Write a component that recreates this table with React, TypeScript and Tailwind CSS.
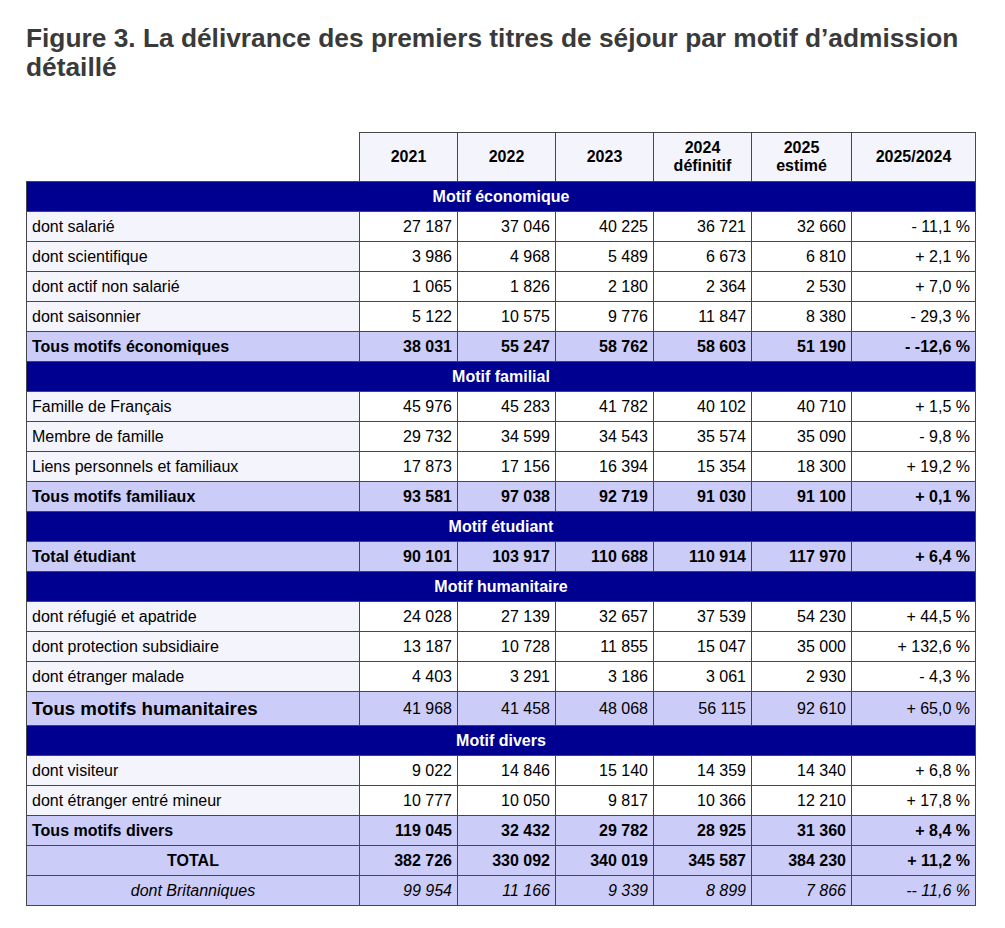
type Row =
  | { kind: "section"; label: string }
  | { kind: "data" | "total" | "italic" | "grand" | "big"; label: string; values: string[] };

const rows: Row[] = [
  { kind: "section", label: "Motif économique" },
  { kind: "data", label: "dont salarié", values: ["27 187", "37 046", "40 225", "36 721", "32 660", "- 11,1 %"] },
  { kind: "data", label: "dont scientifique", values: ["3 986", "4 968", "5 489", "6 673", "6 810", "+ 2,1 %"] },
  { kind: "data", label: "dont actif non salarié", values: ["1 065", "1 826", "2 180", "2 364", "2 530", "+ 7,0 %"] },
  { kind: "data", label: "dont saisonnier", values: ["5 122", "10 575", "9 776", "11 847", "8 380", "- 29,3 %"] },
  { kind: "total", label: "Tous motifs économiques", values: ["38 031", "55 247", "58 762", "58 603", "51 190", "- -12,6 %"] },
  { kind: "section", label: "Motif familial" },
  { kind: "data", label: "Famille de Français", values: ["45 976", "45 283", "41 782", "40 102", "40 710", "+ 1,5 %"] },
  { kind: "data", label: "Membre de famille", values: ["29 732", "34 599", "34 543", "35 574", "35 090", "- 9,8 %"] },
  { kind: "data", label: "Liens personnels et familiaux", values: ["17 873", "17 156", "16 394", "15 354", "18 300", "+ 19,2 %"] },
  { kind: "total", label: "Tous motifs familiaux", values: ["93 581", "97 038", "92 719", "91 030", "91 100", "+ 0,1 %"] },
  { kind: "section", label: "Motif étudiant" },
  { kind: "total", label: "Total étudiant", values: ["90 101", "103 917", "110 688", "110 914", "117 970", "+ 6,4 %"] },
  { kind: "section", label: "Motif humanitaire" },
  { kind: "data", label: "dont réfugié et apatride", values: ["24 028", "27 139", "32 657", "37 539", "54 230", "+ 44,5 %"] },
  { kind: "data", label: "dont protection subsidiaire", values: ["13 187", "10 728", "11 855", "15 047", "35 000", "+ 132,6 %"] },
  { kind: "data", label: "dont étranger malade", values: ["4 403", "3 291", "3 186", "3 061", "2 930", "- 4,3 %"] },
  { kind: "big", label: "Tous motifs humanitaires", values: ["41 968", "41 458", "48 068", "56 115", "92 610", "+ 65,0 %"] },
  { kind: "section", label: "Motif divers" },
  { kind: "data", label: "dont visiteur", values: ["9 022", "14 846", "15 140", "14 359", "14 340", "+ 6,8 %"] },
  { kind: "data", label: "dont étranger entré mineur", values: ["10 777", "10 050", "9 817", "10 366", "12 210", "+ 17,8 %"] },
  { kind: "total", label: "Tous motifs divers", values: ["119 045", "32 432", "29 782", "28 925", "31 360", "+ 8,4 %"] },
  { kind: "grand", label: "TOTAL", values: ["382 726", "330 092", "340 019", "345 587", "384 230", "+ 11,2 %"] },
  { kind: "italic", label: "dont Britanniques", values: ["99 954", "11 166", "9 339", "8 899", "7 866", "-- 11,6 %"] },
];

const cell = "border border-[#474747] px-[5px]";

function TableRow({ row }: { row: Row }) {
  if (row.kind === "section") {
    return (
      <tr className="h-[30px]">
        <td colSpan={7} className={`${cell} bg-[#000090] text-center font-bold text-white`}>
          {row.label}
        </td>
      </tr>
    );
  }

  // lignes de total : fond lavande
  const lavender = row.kind !== "data";
  const labelBg = lavender ? "bg-[#ccccf8]" : "bg-[#f4f4fc]";
  const numBg = lavender ? "bg-[#ccccf8]" : "bg-white";
  const weight = row.kind === "total" || row.kind === "grand" ? "font-bold" : "font-normal";
  const style = row.kind === "italic" ? "italic" : "";

  let labelClass = `${cell} ${labelBg} text-left ${weight} ${style}`;
  if (row.kind === "grand" || row.kind === "italic") labelClass = `${cell} ${labelBg} text-center ${weight} ${style}`;
  if (row.kind === "big") labelClass = `${cell} ${labelBg} text-left text-[18.67px] font-bold`;

  return (
    <tr className={row.kind === "big" ? "h-[34px]" : "h-[30px]"}>
      <td className={labelClass}>{row.label}</td>
      {row.values.map((v, i) => (
        <td key={i} className={`${cell} ${numBg} text-right ${weight} ${style}`}>
          {v}
        </td>
      ))}
    </tr>
  );
}

export default function App() {
  return (
    <div className="min-h-[928px] w-[1005px] bg-white pl-[26px] pt-[24px] font-['Liberation_Sans',Arial,sans-serif] text-black">
      <h1 className="text-[26.3px] font-bold leading-[29px] text-[#3a3a3a]">
        Figure 3. La délivrance des premiers titres de séjour par motif d’admission détaillé
      </h1>

      <table className="mt-[50px] w-[949px] table-fixed border-collapse text-[16px]">
        <colgroup>
          <col className="w-[333px]" />
          <col className="w-[98px]" />
          <col className="w-[98px]" />
          <col className="w-[98px]" />
          <col className="w-[98px]" />
          <col className="w-[100px]" />
          <col className="w-[124px]" />
        </colgroup>
        <thead>
          <tr className="h-[49px]">
            <th className="border-0"></th>
            {["2021", "2022", "2023"].map((y) => (
              <th key={y} className={`${cell} bg-[#f4f4fc] text-center font-bold`}>
                {y}
              </th>
            ))}
            <th className={`${cell} bg-[#f4f4fc] text-center font-bold leading-[18px]`}>
              2024
              <br />
              définitif
            </th>
            <th className={`${cell} bg-[#f4f4fc] text-center font-bold leading-[18px]`}>
              2025
              <br />
              estimé
            </th>
            <th className={`${cell} bg-[#f4f4fc] text-center font-bold`}>2025/2024</th>
          </tr>
        </thead>
        <tbody>
          {rows.map((r, i) => (
            <TableRow key={i} row={r} />
          ))}
        </tbody>
      </table>
    </div>
  );
}
